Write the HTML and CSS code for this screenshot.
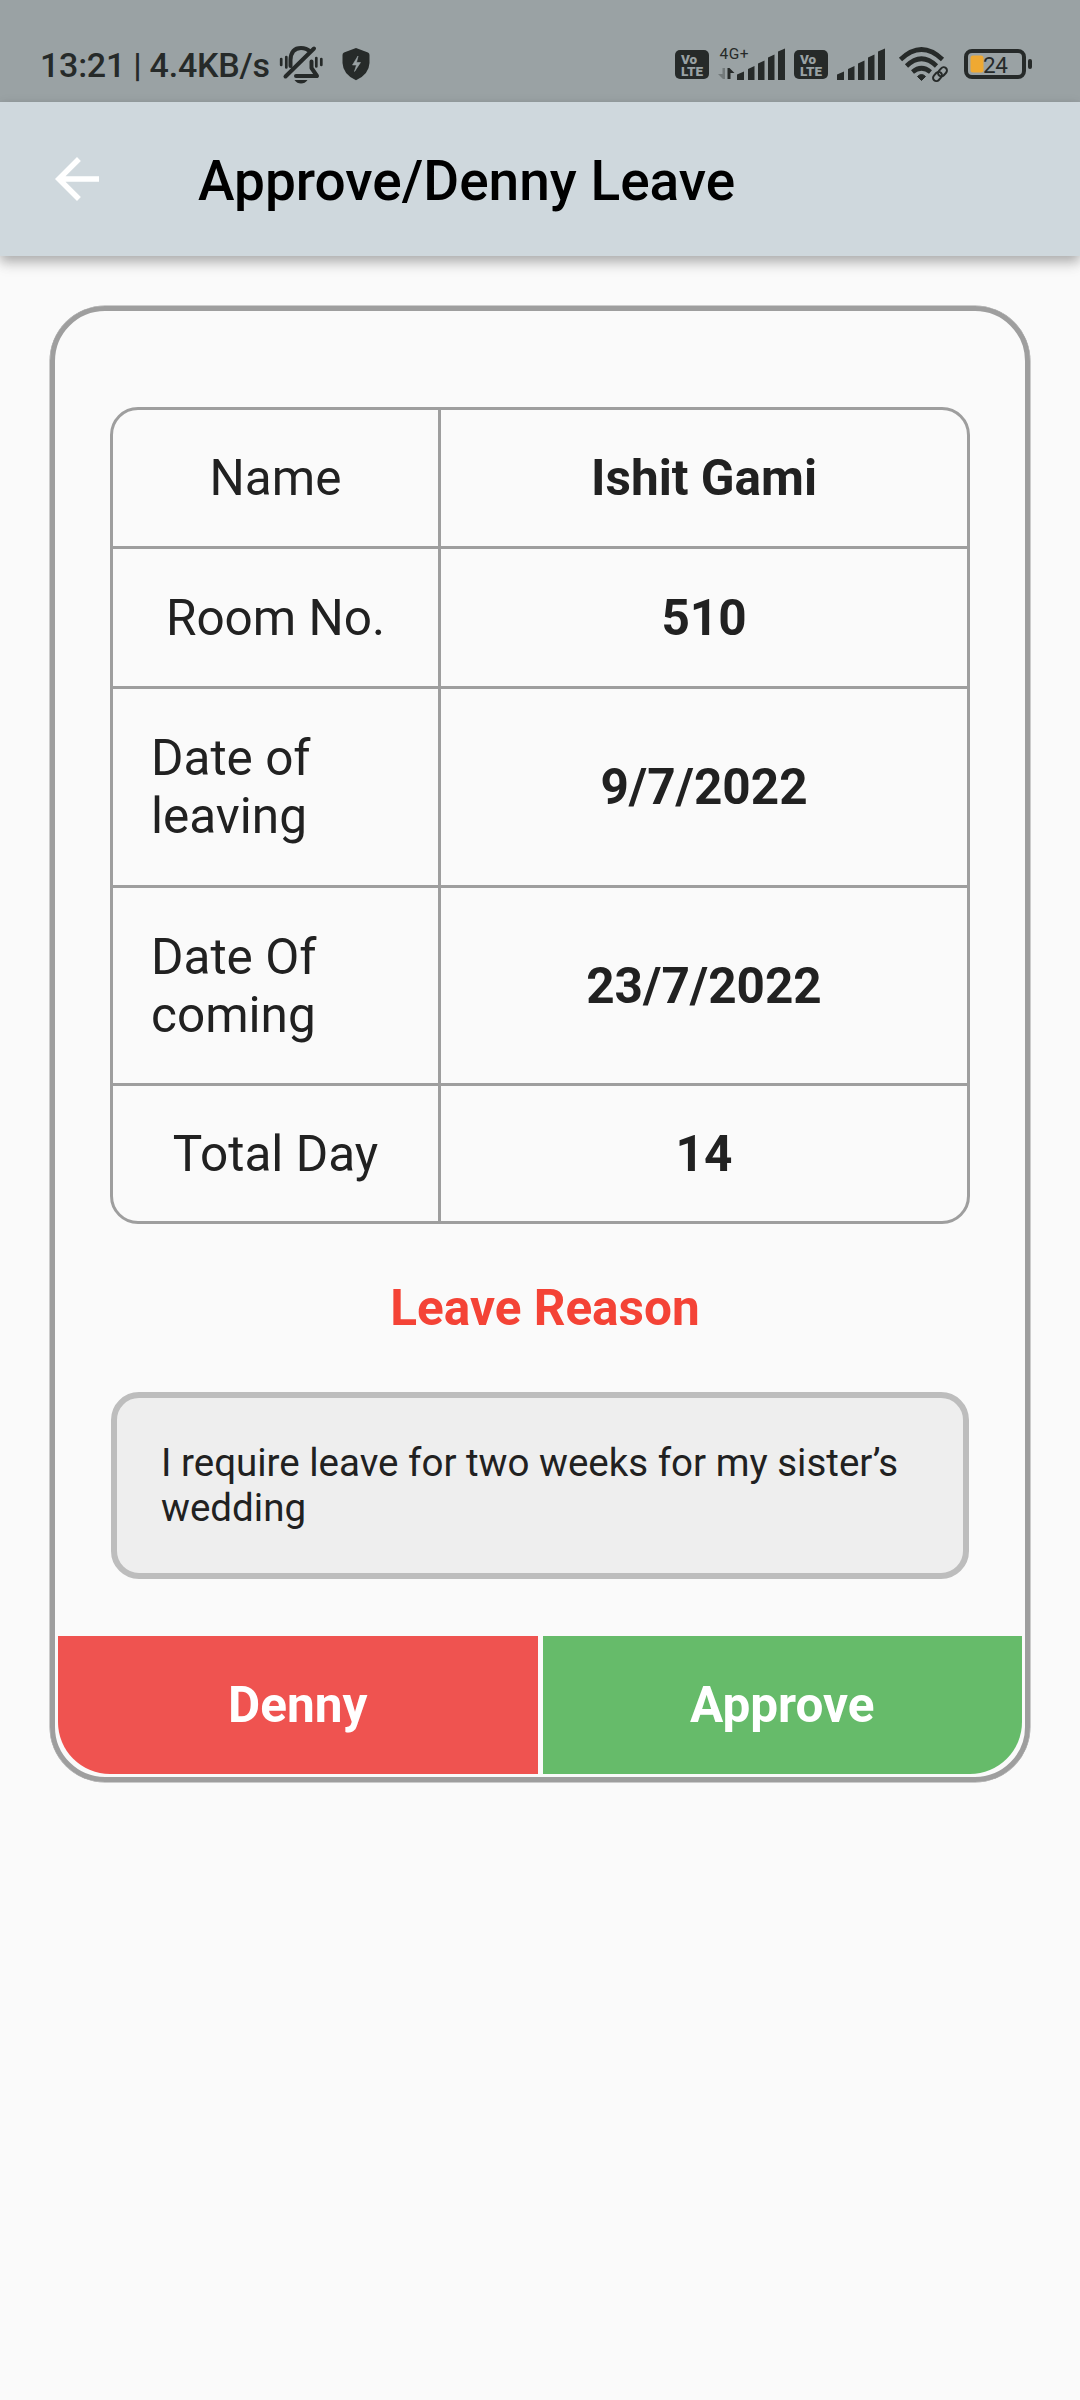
FILE: index.html
```html
<!DOCTYPE html>
<html lang="en">
<head>
<meta charset="utf-8">
<title>Approve/Denny Leave</title>
<link rel="stylesheet" href="styles.css">
</head>
<body>
<div class="status">
  <span class="clock">13:21 | 4.4KB/s</span>
  <svg class="bell" width="46" height="44" viewBox="278 42 46 44" fill="none" stroke="#262a29" stroke-width="4" stroke-linecap="round" stroke-linejoin="round">
    <path d="M290.500 66V60Q291 48 301 48Q306.500 48 310 51.500M314 48.500L285.500 76.500M311.500 61.500V68L317 76H296" />
    <path d="M281.200 59V65M286.300 57V67.500M316.300 58V66.500M321.300 59V65" stroke-width="2.700"/>
    <path d="M294.500 80H307.500Q305 83.500 301 83.500T294.500 80Z" fill="#262a29" stroke="none"/>
  </svg>
  <svg class="shield" width="28" height="34" viewBox="342 47 28 34">
    <path d="M356 48L368 52.500Q369.500 53 369.500 55V63Q369 74.500 356 80.200Q343 74.500 342.500 63V55Q342.500 53 344 52.500Z" fill="#262a29"/>
    <path d="M358 56L352.500 65H356.500L354.500 71.500L360.500 62.500H356.500Z" fill="#9aa2a4" stroke="#9aa2a4" stroke-width=".6"/>
  </svg>
  <span class="volte"><b>Vo</b><b>LTE</b></span>
  <svg class="network" width="70" height="36" viewBox="717 46 70 36" fill="#262a29">
    <text x="719.500" y="59" font-size="15.500" textLength="29">4G+</text>
    <path d="M722.500 68H725V79H723L718 74H722.500Z" fill="#737a7b"/>
    <path d="M727.500 79V68H729.500L734.500 73H730.500V79Z"/>
    <path d="M737 74.500L744 71.500V80H737ZM748 69L754.500 66V80H748ZM758 63.500L764.500 60.500V80H758ZM768 57.500L774.500 54.500V80H768ZM778 51.500L785 48.500V80H778Z"/>
  </svg>
  <span class="volte second"><b>Vo</b><b>LTE</b></span>
  <svg class="bars" width="50" height="36" viewBox="736 46 50 36" fill="#262a29">
    <path d="M737 74.500L744 71.500V80H737ZM748 69L754.500 66V80H748ZM758 63.500L764.500 60.500V80H758ZM768 57.500L774.500 54.500V80H768ZM778 51.500L785 48.500V80H778Z"/>
  </svg>
  <svg class="wifi" width="52" height="40" viewBox="898 44 52 40" fill="none" stroke="#262a29">
    <path d="M900.500 59.500Q921.500 39.500 942.500 59.500M906.500 66Q921.500 51.500 936.500 66M912.500 72Q921.500 64.500 930.500 72" stroke-width="4.600"/>
    <path d="M917.500 76.500Q921.500 72.500 925.500 76.500L921.500 80.500Z" fill="#262a29"/>
    <g stroke-width="2"><rect x="-5" y="-3.300" width="10" height="6.600" rx="3.300" transform="translate(942.500 71.800) rotate(-48)"/><rect x="-5" y="-3.300" width="10" height="6.600" rx="3.300" transform="translate(937.500 76.500) rotate(-48)"/></g>
  </svg>
  <svg class="battery" width="70" height="34" viewBox="963 47 70 34">
    <rect x="966" y="51" width="58" height="26" rx="6" fill="none" stroke="#262a29" stroke-width="4"/>
    <rect x="970.500" y="55.500" width="13" height="17" rx="2.500" fill="#efa932"/>
    <rect x="1028" y="59" width="4" height="10" rx="2" fill="#262a29"/>
    <text x="983" y="73" font-size="22.500" textLength="25" fill="#262a29">24</text>
  </svg>
</div>
<header class="appbar">
  <svg width="66" height="66" viewBox="0 0 24 24" fill="#fff"><path d="M20 11H7.830l5.590-5.590L12 4l-8 8 8 8 1.410-1.410L7.830 13H20v-2z"/></svg>
  <h1>Approve/Denny Leave</h1>
</header>
<main class="card">
  <div class="details">
    <div class="row"><span class="label">Name</span><span class="value">Ishit Gami</span></div>
    <div class="row second"><span class="label">Room No.</span><span class="value">510</span></div>
    <div class="row leaving"><span class="label">Date of leaving</span><span class="value">9/7/2022</span></div>
    <div class="row coming"><span class="label">Date Of coming</span><span class="value">23/7/2022</span></div>
    <div class="row"><span class="label">Total Day</span><span class="value">14</span></div>
  </div>
  <h2>Leave Reason</h2>
  <p class="reason">I require leave for two weeks for my sister’s wedding</p>
  <div class="actions">
    <button class="deny">Denny</button>
    <button class="approve">Approve</button>
  </div>
</main>
</body>
</html>
```
FILE: styles.css
```css
* { box-sizing: border-box; }
body {
  margin: 0;
  min-height: 2400px;
  background: #fafafa;
  color: #212121;
  font-family: Roboto, "Liberation Sans", sans-serif;
}
svg { display: block; flex: none; }
svg text { font-family: Roboto, sans-serif; }

.status {
  display: flex;
  align-items: flex-start;
  height: 102px;
  padding-left: 40px;
  background: #9aa2a4;
  color: #262a29;
}
.clock {
  width: 238px;
  margin-top: 45px;
  font-size: 34px;
  font-weight: 500;
  letter-spacing: -.25px;
  line-height: 40px;
  white-space: nowrap;
}
.bell { margin-top: 42px; }
.shield { margin: 47px 0 0 18px; }
.volte {
  display: flex;
  flex-direction: column;
  width: 34px;
  height: 29px;
  margin: 50px 0 0 305px;
  padding: 3px 0 0 6px;
  border-radius: 5px;
  background: #262a29;
  color: #9aa2a4;
  font: 700 13.500px/12px Roboto, sans-serif;
}
.volte.second { margin-left: 7px; }
.network { margin: 46px 0 0 8px; }
.bars { margin: 46px 0 0 8px; }
.wifi { margin: 44px 0 0 12px; }
.battery { margin: 47px 0 0 13px; }

.appbar {
  display: flex;
  align-items: center;
  height: 154px;
  padding: 0 44px;
  background: #cfd8dd;
  box-shadow: 0 5px 11px rgba(0, 0, 0, .25), 0 9px 14px rgba(0, 0, 0, .09);
}
h1 {
  margin: 3px 0 0 88px;
  color: #000;
  font-size: 55px;
  font-weight: 500;
  line-height: 64px;
}

.card {
  width: 980px;
  height: 1476px;
  margin: 50px auto 0;
  padding: 96px 3px 3px;
  border: 5px solid #9e9e9e;
  border-radius: 55px;
  box-shadow: 0 0 0 .5px #9e9e9e;
}
.details {
  width: 860px;
  margin: 0 auto;
  border: 3px solid #9e9e9e;
  border-radius: 28px;
}
.row {
  display: grid;
  grid-template-columns: 328px 1fr;
  height: 139px;
  border-bottom: 3px solid #9e9e9e;
}
.row.second { height: 140px; }
.row.leaving { height: 199px; }
.row.coming { height: 198px; }
.row:last-child { height: 135px; border-bottom: 0; }
.label, .value {
  display: flex;
  align-items: center;
  justify-content: center;
  font-size: 49.500px;
  line-height: 58px;
}
.label {
  padding: 0 38px;
  border-right: 3px solid #9e9e9e;
}
.value { font-weight: 700; }
h2 {
  margin: 55px 0 0 10px;
  color: #f44336;
  font-size: 49.500px;
  font-weight: 700;
  line-height: 58px;
  text-align: center;
}
.reason {
  width: 858px;
  height: 187px;
  margin: 55px auto 0;
  padding: 42px 44px;
  border: 6px solid #bdbdbd;
  border-radius: 28px;
  background: #eee;
  font-size: 38.500px;
  line-height: 45px;
}
.actions {
  display: grid;
  grid-template-columns: 1fr 1fr;
  gap: 5px;
  height: 138px;
  margin-top: 57px;
}
button {
  border: 0;
  padding: 0;
  color: #fff;
  font: 700 49.500px/58px Roboto, sans-serif;
}
.deny { border-bottom-left-radius: 52px; background: #ef5350; }
.approve { border-bottom-right-radius: 52px; background: #66bb6a; }
```
